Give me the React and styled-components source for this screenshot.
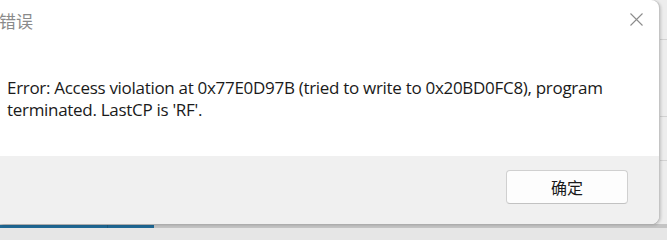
import React from 'react';
import styled, { createGlobalStyle } from 'styled-components';

const GlobalStyle = createGlobalStyle`
    html, body {
        margin: 0;
        padding: 0;
        background: #e6e6e6;
    }
`;

const Screen = styled.div`
    width: 667px;
    height: 228px;
    overflow: hidden;
    display: grid;
    grid-template-columns: 659px 1fr;
    grid-template-rows: 224px 4px;
    background: #ececec;
    font-family: "Segoe UI", "Open Sans", "Noto Sans CJK SC", sans-serif;
`;

const Backdrop = styled.div`
    background:
        linear-gradient(#d2d2d2, #d2d2d2) 0 39px / 100% 1px no-repeat,
        linear-gradient(#d2d2d2, #d2d2d2) 0 116px / 100% 1px no-repeat,
        linear-gradient(#d2d2d2, #d2d2d2) 0 160px / 100% 1px no-repeat,
        #ededed;
`;

const Dialog = styled.div`
    display: flex;
    flex-direction: column;
    background: #fff;
    border-radius: 0 8px 8px 0;
    box-shadow: 1px 0 0 #c4c4c4, 2px 1px 3px rgba(0, 0, 0, 0.18), 0 1px 0 #c4c4c4;
    overflow: hidden;
    position: relative;
    z-index: 1;
`;

const TitleBar = styled.div`
    height: 38px;
    display: flex;
    align-items: center;
    justify-content: space-between;
    padding: 0 6px 0 0;
`;

const Title = styled.span`
    font-family: "Noto Sans CJK SC", sans-serif;
    font-size: 17px;
    color: #8a8a8a;
    margin-left: -1px;
    margin-top: 2px;
`;

const Close = styled.button`
    width: 28px;
    height: 28px;
    border: 0;
    background: none;
    padding: 0;
    display: flex;
    align-items: center;
    justify-content: center;
    margin-right: 3px;
    color: #8c8c8c;
`;

const Body = styled.div`
    flex: 1;
    padding: 39px 0 0 7px;
    font-family: "Open Sans", sans-serif;
    font-size: 17px;
    line-height: 22px;
    letter-spacing: -0.3px;
    color: #1a1a1a;
`;

const Footer = styled.div`
    height: 68px;
    background: #f0f0f0;
    display: flex;
    align-items: flex-start;
    justify-content: flex-end;
    padding: 14px 31px 0 0;
    box-sizing: border-box;
`;

const Button = styled.button`
    width: 122px;
    height: 34px;
    box-sizing: border-box;
    border: 1px solid #d0d0d0;
    border-bottom-color: #c2c2c2;
    border-radius: 4px;
    background: #fdfdfd;
    font-family: "Noto Sans CJK SC", sans-serif;
    font-size: 16px;
    color: #1a1a1a;
    padding: 0;
`;

const Taskbar = styled.div`
    grid-column: 1 / -1;
    display: flex;
    background: #c4c4c4;
`;

const TaskSegment = styled.div`
    width: ${(p) => p.w}px;
    background: #1f6894;
    border-right: ${(p) => (p.divider ? '1px solid #1a5a80' : 'none')};
`;

const App = () => (
    <>
        <GlobalStyle />
        <Screen>
            <Dialog>
                <TitleBar>
                    <Title>错误</Title>
                    <Close aria-label="关闭">
                        <svg width="13" height="13" viewBox="0 0 13 13">
                            <path d="M0.5 0.5L12.5 12.5M12.5 0.5L0.5 12.5" stroke="currentColor" strokeWidth="1.1" />
                        </svg>
                    </Close>
                </TitleBar>
                <Body>
                    Error: Access violation at 0x77E0D97B (tried to write to 0x20BD0FC8), program
                    <br />
                    terminated. LastCP is 'RF'.
                </Body>
                <Footer>
                    <Button>确定</Button>
                </Footer>
            </Dialog>
            <Backdrop />
            <Taskbar>
                <TaskSegment w={107} divider />
                <TaskSegment w={46} />
            </Taskbar>
        </Screen>
    </>
);

export default App;
